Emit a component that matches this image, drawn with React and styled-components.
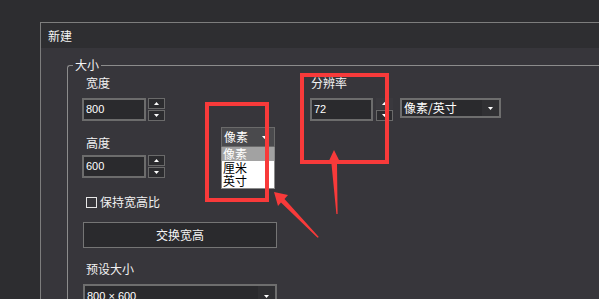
import React from 'react';
import styled, { createGlobalStyle } from 'styled-components';

const Global = createGlobalStyle`
  html, body { margin: 0; padding: 0; background: #2d2d30; overflow: hidden; }
  body { font-family: "Noto Sans CJK SC", "Noto Sans", sans-serif; -webkit-font-smoothing: none; }
  * { box-sizing: border-box; }
`;

const Page = styled.div`
  position: relative;
  width: 599px;
  height: 299px;
  overflow: hidden;
  padding: 22px 0 0 40px;
`;

const Dialog = styled.div`
  width: 620px;
  height: 320px;
  border-top: 1px solid #7d7d7d;
  border-left: 1px solid #7d7d7d;
  background: #37363b;
`;

const TitleBar = styled.div`
  height: 25px;
  line-height: 26px;
  padding-left: 7px;
  background: #2e2e31;
  color: #f4f4f4;
  font-size: 12px;
`;

const Body = styled.div`
  padding: 10px 0 0 26px;
`;

const Group = styled.fieldset`
  margin: 0;
  padding: 0 0 0 5px;
  border: 1px solid #8c8c8c;
  border-right: none;
  border-bottom: none;
  border-radius: 3px 0 0 0;
  min-width: 0;
  width: 560px;
  height: 270px;
`;

const Legend = styled.legend`
  padding: 0 2px;
  font-size: 12px;
  line-height: 14px;
  color: #f4f4f4;
`;

const Columns = styled.div`
  display: flex;
  gap: 33px;
  padding-left: 9px;
`;

const Column = styled.div`
  display: flex;
  flex-direction: column;
  width: ${p => p.$w}px;
  flex: none;
`;

const Label = styled.div`
  font-size: 12px;
  line-height: 16px;
  height: 16px;
  color: #f2f2f2;
  padding-left: ${p => p.$indent ?? 4}px;
  margin-top: ${p => p.$mt ?? 0}px;
`;

const FieldRow = styled.div`
  display: flex;
  align-items: flex-start;
  margin-top: ${p => p.$mt ?? 0}px;
`;

const NumInput = styled.div`
  width: ${p => p.$w}px;
  height: 23px;
  border: 2px solid #6c6c6c;
  background: #2a2a2d;
  color: #ffffff;
  font-family: "Liberation Sans", "Noto Sans", sans-serif;
  font-size: 11px;
  line-height: 19px;
  padding-left: 2px;
`;

const Spinner = styled.div`
  display: flex;
  flex-direction: column;
  gap: 1px;
  margin-left: ${p => p.$ml}px;
`;

const SpinButton = styled.div`
  width: 17px;
  height: 11px;
  border: 1px solid ${p => (p.$flat ? 'transparent' : '#6a6a6a')};
  background: ${p => (p.$flat ? '#3a393e' : '#2c2c2f')};
  display: flex;
  align-items: center;
  justify-content: center;
`;

const Tri = ({ down }) => (
  <svg width="5" height="3" viewBox="0 0 5 3">
    <polygon points={down ? '0,0 5,0 2.5,3' : '0,3 5,3 2.5,0'} fill="#ffffff" />
  </svg>
);

const Spin = ({ ml, flatUp }) => (
  <Spinner $ml={ml}>
    <SpinButton $flat={flatUp}><Tri /></SpinButton>
    <SpinButton><Tri down /></SpinButton>
  </Spinner>
);

const MidRow = styled.div`
  position: relative;
  display: flex;
  justify-content: space-between;
  align-items: flex-start;
  height: 34px;
`;

const UnitWrap = styled.div`
  position: relative;
  margin-top: 6px;
  margin-right: 2px;
`;

const UnitSelect = styled.div`
  width: 54px;
  height: 20px;
  border: 1px solid #6a6a6a;
  background: #4a4a4d;
  color: #ffffff;
  font-size: 12px;
  line-height: 18px;
  padding-left: 2px;
  display: flex;
  justify-content: space-between;
  align-items: center;
  padding-right: 7px;
`;

const ListBox = styled.div`
  position: absolute;
  left: 0;
  top: 20px;
  width: 54px;
  background: #ffffff;
  border: 1px solid #8a8a8a;
  border-top: none;
  z-index: 2;
`;

const ListItem = styled.div`
  height: 13.7px;
  line-height: 13.7px;
  font-size: 12px;
  padding-left: 1px;
  overflow: visible;
  color: ${p => (p.$active ? '#ffffff' : '#000000')};
  background: ${p => (p.$active ? '#a2a2a2' : '#ffffff')};
`;

const CheckRow = styled.div`
  display: flex;
  align-items: center;
  gap: 3px;
  height: 16px;
  margin-top: 16px;
  padding-left: 4px;
  color: #f2f2f2;
  font-size: 12px;
  line-height: 16px;
`;

const CheckBox = styled.span`
  width: 11px;
  height: 11px;
  border: 1px solid #e6e6e6;
  display: inline-block;
`;

const Button = styled.div`
  margin-top: 12px;
  margin-left: 1px;
  height: 26px;
  width: 194px;
  border: 1px solid #757575;
  background: #2a2a2d;
  color: #f4f4f4;
  font-size: 12px;
  line-height: 24px;
  text-align: center;
`;

const Select = styled.div`
  width: ${p => p.$w}px;
  height: ${p => p.$h}px;
  margin-left: ${p => p.$ml ?? 0}px;
  margin-top: ${p => p.$mt ?? 0}px;
  border: 2px solid #6e6e6e;
  background: #2a2a2d;
  color: #ffffff;
  display: flex;
  align-items: stretch;
  flex: none;
`;

const SelectText = styled.div`
  flex: 1;
  padding-left: 2px;
  font-size: ${p => p.$fs ?? 12}px;
  line-height: ${p => p.$lh}px;
  font-family: ${p => (p.$num ? '"Liberation Sans", "Noto Sans", sans-serif' : '"Noto Sans CJK SC", sans-serif')};
`;

const SelectArrow = styled.div`
  width: 17px;
  background: #303033;
  display: flex;
  align-items: center;
  justify-content: center;
`;

const Overlay = styled.svg`
  position: absolute;
  left: 0;
  top: 0;
  pointer-events: none;
  z-index: 5;
`;

export default function App() {
  return (
    <>
      <Global />
      <Page>
        <Dialog>
          <TitleBar>新建</TitleBar>
          <Body>
            <Group>
              <Legend>大小</Legend>
              <Columns>
                <Column $w={195}>
                  <Label $mt={3}>宽度</Label>
                  <FieldRow $mt={7}>
                    <NumInput $w={64}>800</NumInput>
                    <Spin ml={2} />
                  </FieldRow>
                  <MidRow>
                    <Label $mt={14}>高度</Label>
                    <UnitWrap>
                      <UnitSelect>
                        <span>像素</span>
                        <Tri down />
                      </UnitSelect>
                      <ListBox>
                        <ListItem $active>像素</ListItem>
                        <ListItem>厘米</ListItem>
                        <ListItem>英寸</ListItem>
                      </ListBox>
                    </UnitWrap>
                  </MidRow>
                  <FieldRow>
                    <NumInput $w={64}>600</NumInput>
                    <Spin ml={2} />
                  </FieldRow>
                  <CheckRow>
                    <CheckBox />
                    <span>保持宽高比</span>
                  </CheckRow>
                  <Button>交换宽高</Button>
                  <Label $mt={13}>预设大小</Label>
                  <Select $w={194} $h={24} $ml={1} $mt={7}>
                    <SelectText $num $fs={11} $lh={20}>800 × 600</SelectText>
                    <SelectArrow><Tri down /></SelectArrow>
                  </Select>
                </Column>
                <Column $w={250}>
                  <Label $mt={3} $indent={1}>分辨率</Label>
                  <FieldRow $mt={7}>
                    <NumInput $w={63}>72</NumInput>
                    <Spin ml={3} flatUp />
                    <Select $w={101} $h={20} $ml={7}>
                      <SelectText $lh={16}>像素/英寸</SelectText>
                      <SelectArrow><Tri down /></SelectArrow>
                    </Select>
                  </FieldRow>
                </Column>
              </Columns>
            </Group>
          </Body>
        </Dialog>
        <Overlay width="599" height="299" viewBox="0 0 599 299">
          <g fill="none" stroke="#f83a3a" strokeWidth="4">
            <rect x="207" y="104" width="60" height="96" />
            <rect x="302" y="75" width="85" height="87" />
          </g>
          <g fill="#f83a3a">
            <polygon points="334,150 341,164 337,164 337.6,214 336.4,214 331.5,164 327.5,164" />
            <polygon points="274,192 288,195 284.5,199 318.8,237 317.6,237.8 281,202.5 278,206" />
          </g>
        </Overlay>
      </Page>
    </>
  );
}
